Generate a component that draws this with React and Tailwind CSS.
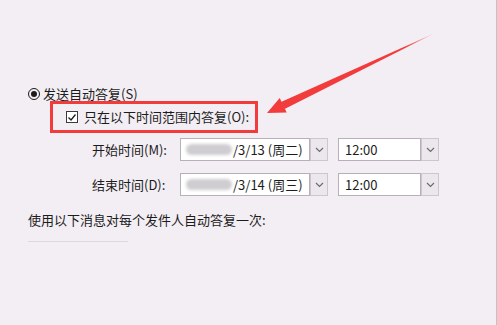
import React from "react";

const font = { fontFamily: '"Noto Sans CJK SC", "Noto Sans", sans-serif' };

const Chevron = () => (
  <svg width="9" height="6" viewBox="0 0 9 6" fill="none">
    <path d="M1 1l3.5 3.5L8 1" stroke="#6b6b70" strokeWidth="1.2" />
  </svg>
);

const DropButton = () => (
  <div className="w-[18px] h-full bg-[#ebe7ed] border border-[#cbc7cd] flex items-center justify-center">
    <Chevron />
  </div>
);

const TimeRow = ({ label, date }) => (
  <div className="flex items-center h-[23px]">
    <span className="w-[100px] pl-[12px] text-[13px] text-[#1c1c1c]">{label}</span>
    <div className="flex h-full">
      <div className="w-[130px] h-full bg-white border border-[#b5b1b7] flex items-center pl-[5px] text-[13px] text-[#1c1c1c]">
        <span className="inline-block w-[46px] h-[11px] rounded-full bg-[#cfcdd1] blur-[1.5px] mr-[1px]" />
        <span>{date}</span>
      </div>
      <DropButton />
    </div>
    <div className="flex h-full ml-[10px]">
      <div className="w-[83px] h-full bg-white border border-[#b5b1b7] flex items-center pl-[6px] text-[13px] text-[#1c1c1c]">
        12:00
      </div>
      <DropButton />
    </div>
  </div>
);

export default function App() {
  return (
    <div
      className="relative w-[497px] h-[325px] bg-[#f3eef4] border-r border-[#c4c0c6] overflow-hidden"
      style={font}
    >
      <div className="pt-[86px] pl-[28px]">
        {/* radio */}
        <div className="flex items-center h-[16px]">
          <div className="w-[12px] h-[12px] rounded-full border border-[#1c1c1c] flex items-center justify-center">
            <div className="w-[6px] h-[6px] rounded-full bg-[#1c1c1c]" />
          </div>
          <span className="ml-[3px] text-[13px] text-[#1c1c1c]">发送自动答复(S)</span>
        </div>

        {/* highlighted checkbox */}
        <div className="ml-[22px] mt-[-1px] w-[208px] h-[32px] border-[3px] border-[#f23b3b] flex items-center pl-[13px]">
          <div className="w-[12px] h-[12px] border border-[#3a3a3a] bg-white flex items-center justify-center">
            <svg width="10" height="9" viewBox="0 0 10 9" fill="none">
              <path d="M1.5 4.5l2.5 2.5L8.5 1.5" stroke="#1c1c1c" strokeWidth="1.3" />
            </svg>
          </div>
          <span className="ml-[6px] text-[13px] text-[#1c1c1c]">只在以下时间范围内答复(O):</span>
        </div>

        <div className="mt-[5px] ml-[52px] flex flex-col gap-[12px]">
          <TimeRow label="开始时间(M):" date="/3/13 (周二)" />
          <TimeRow label="结束时间(D):" date="/3/14 (周三)" />
        </div>

        <div className="mt-[15px] text-[13px] text-[#1c1c1c] h-[18px] flex items-center">
          使用以下消息对每个发件人自动答复一次:
        </div>
        <div className="mt-[12px] w-[100px] h-px bg-[#dcd8de]" />
      </div>

      {/* annotation arrow */}
      <svg className="absolute left-0 top-0" width="497" height="325" viewBox="0 0 497 325">
        <defs>
          <linearGradient id="tail" x1="435" y1="33" x2="283" y2="106" gradientUnits="userSpaceOnUse">
            <stop offset="0" stopColor="#f23b3b" stopOpacity="0.2" />
            <stop offset="0.2" stopColor="#f23b3b" />
            <stop offset="1" stopColor="#f23b3b" />
          </linearGradient>
        </defs>
        <path d="M435 33 L284.6 109 L281 102 Z" fill="url(#tail)" />
        <path d="M267 113 L279.7 98 L286.7 112.4 Z" fill="#f23b3b" />
      </svg>
    </div>
  );
}
